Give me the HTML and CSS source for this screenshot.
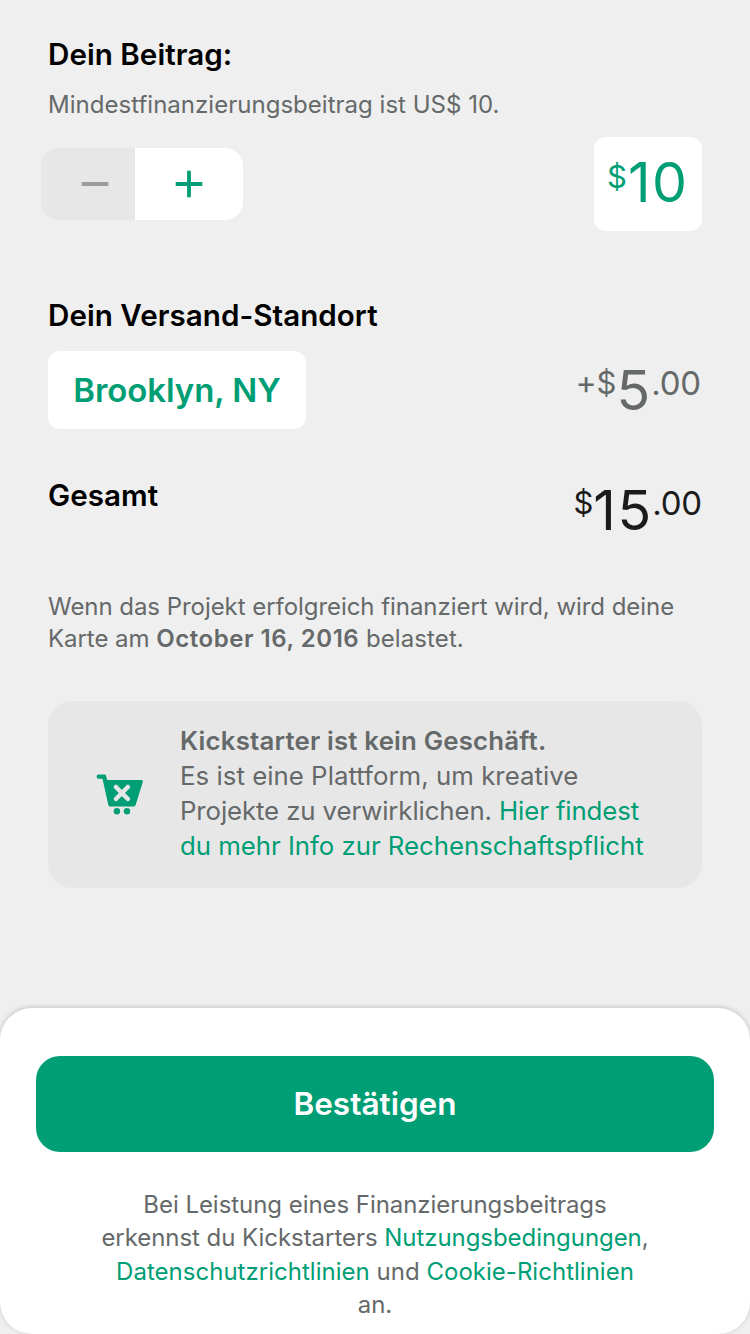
FILE: index.html
```html
<!DOCTYPE html>
<html lang="de">
<head>
<meta charset="utf-8">
<title>Dein Beitrag</title>
<link rel="stylesheet" href="styles.css">
</head>
<body>
<main class="pledge">
  <h2 class="heading">Dein Beitrag:</h2>
  <p class="hint">Mindestfinanzierungsbeitrag ist US$ 10.</p>
  <div class="amount-row">
    <div class="stepper">
      <button class="step step-minus" aria-label="Weniger"><svg width="28" height="28" viewBox="0 0 28 28"><path d="M.7 14H27.300"/></svg></button>
      <button class="step step-plus" aria-label="Mehr"><svg width="28" height="28" viewBox="0 0 28 28"><path d="M.7 14H27.300M14 .7V27.300"/></svg></button>
    </div>
    <div class="amount money"><span class="small">$</span><span class="big">10</span></div>
  </div>
  <h2 class="heading heading-shipping">Dein Versand-Standort</h2>
  <div class="shipping-row">
    <button class="location">Brooklyn, NY</button>
    <div class="money shipping"><span class="plus">+</span><span class="small">$</span><span class="big">5</span><span class="cents">.00</span></div>
  </div>
  <div class="total-row">
    <h2 class="heading">Gesamt</h2>
    <div class="money total"><span class="small">$</span><span class="big">15</span><span class="cents">.00</span></div>
  </div>
  <p class="charge"><span class="line">Wenn das Projekt erfolgreich finanziert wird, wird deine</span> <span class="line">Karte am <b class="date">October 16, 2016</b> <span class="charged">belastet.</span></span></p>
  <section class="notice">
    <svg class="cart" width="48" height="42" viewBox="0 0 48 42">
      <path class="cart-body" d="M2.700 .4H8.500Q9.800 .4 10.100 1.700L11.100 6.100H45.400Q47.400 6.100 46.800 8L39.600 31Q39.100 32.500 37.400 32.500H14.200Q12.700 32.500 12.300 31L6.500 4.700H2.700Q.6 4.700 .6 2.500T2.700 .4Z"/>
      <circle class="cart-body" cx="20.900" cy="37.300" r="3.200"/>
      <circle class="cart-body" cx="31" cy="37.300" r="3.200"/>
      <path class="cart-x" d="M19.900 13L31.900 25M31.900 13L19.900 25"/>
    </svg>
    <p class="notice-text"><b class="line notice-title">Kickstarter ist kein Geschäft.</b> <span class="line notice-wide">Es ist eine Plattform, um kreative</span> <span class="line notice-tight">Projekte zu verwirklichen. <a>Hier findest</a></span> <a class="line">du mehr Info zur Rechenschaftspflicht</a></p>
  </section>
</main>
<footer class="sheet">
  <button class="confirm">Bestätigen</button>
  <p class="legal"><span class="line">Bei Leistung eines Finanzierungsbeitrags</span> <span class="line">erkennst du Kickstarters <a>Nutzungsbedingungen</a>,</span> <span class="line legal-wide"><a>Datenschutzrichtlinien</a> und <a>Cookie-Richtlinien</a></span> <span class="line">an.</span></p>
</footer>
</body>
</html>
```

FILE: styles.css
```css
* { box-sizing: border-box; margin: 0; }
body { width: 750px; height: 1334px; overflow: hidden; background: #efefef; font-family: Inter, "Liberation Sans", sans-serif; color: #000; display: flex; flex-direction: column; }
button { border: 0; padding: 0; font: inherit; }
a, .amount { color: #009e74; }
.pledge { height: 1008px; padding: 34px 48px 0; display: flex; flex-direction: column; }
.heading { font-size: 29.600px; line-height: 40px; font-weight: 600; letter-spacing: .03px; white-space: nowrap; }
.hint { margin-top: 15px; height: 32px; font-size: 24px; line-height: 32px; letter-spacing: .02px; color: #656969; white-space: nowrap; }
.amount-row { margin-top: 16px; height: 94px; display: flex; justify-content: space-between; }
.stepper { width: 202px; height: 72px; margin: 11px 0 0 -7px; display: flex; border-radius: 18px; overflow: hidden; }
.step { display: flex; align-items: center; justify-content: center; }
.step svg { fill: none; stroke-width: 3.800; }
.step-minus { width: 94px; padding-left: 14px; background: #e7e7e7; stroke: #9b9e9e; }
.step-plus { width: 108px; background: #fff; stroke: #009e74; }
.money { display: flex; align-items: flex-start; white-space: nowrap; }
.amount { width: 108px; background: #fff; border-radius: 12px; padding: 17px 0 0 13px; }
.big { font-size: 55.500px; line-height: 56px; letter-spacing: 1.600px; }
.small { padding-top: 1px; font-size: 31px; line-height: 40px; }
.amount .small { padding-top: 3px; margin-right: 1px; }
.cents { font-size: 33px; line-height: 40px; padding-top: 1px; letter-spacing: -.2px; margin-left: -.5px; }
.plus { font-size: 32px; line-height: 40px; padding-top: 1px; }
.heading-shipping { margin-top: 64px; }
.shipping-row { margin-top: 16px; height: 78px; display: flex; justify-content: space-between; }
.location { width: 258px; background: #fff; border-radius: 12px; color: #009e74; font-size: 33px; font-weight: 600; letter-spacing: -.08px; }
.shipping { color: #656969; padding: 11px 1px 0 0; }
.total-row { margin-top: 46px; height: 79px; display: flex; justify-content: space-between; }
.total { color: #1b1b1b; padding-top: 7px; }
.charge { margin-top: 37px; font-size: 24px; line-height: 32px; letter-spacing: -.05px; color: #656969; }
.date { letter-spacing: .55px; }
.charged { letter-spacing: .1px; }
.line { display: block; white-space: nowrap; }
.notice { margin-top: 46px; height: 187px; border-radius: 24px; background: #e7e7e7; display: flex; align-items: center; padding-left: 48px; gap: 36px; }
.cart-body { fill: #009e74; }
.cart-x { fill: none; stroke: #e7e7e7; stroke-width: 4.500; stroke-linecap: round; }
.notice-text { padding-bottom: 3px; font-size: 25.800px; line-height: 35px; letter-spacing: -.03px; color: #656969; }
.notice-title { letter-spacing: .2px; }
.notice-wide { letter-spacing: .03px; }
.notice-tight { letter-spacing: -.11px; }
b { font-weight: 600; }
.sheet { height: 326px; background: #fff; border-radius: 32px; box-shadow: 0 -1px 5px rgba(0, 0, 0, .18); padding: 48px 36px 0; }
.confirm { width: 100%; height: 96px; border-radius: 24px; background: #009e74; color: #fff; font-size: 31.500px; font-weight: 600; padding-bottom: 2px; }
.legal { margin-top: 36px; font-size: 24px; line-height: 33.300px; letter-spacing: -.05px; color: #656969; text-align: center; }
.legal-wide { letter-spacing: .02px; }
```
